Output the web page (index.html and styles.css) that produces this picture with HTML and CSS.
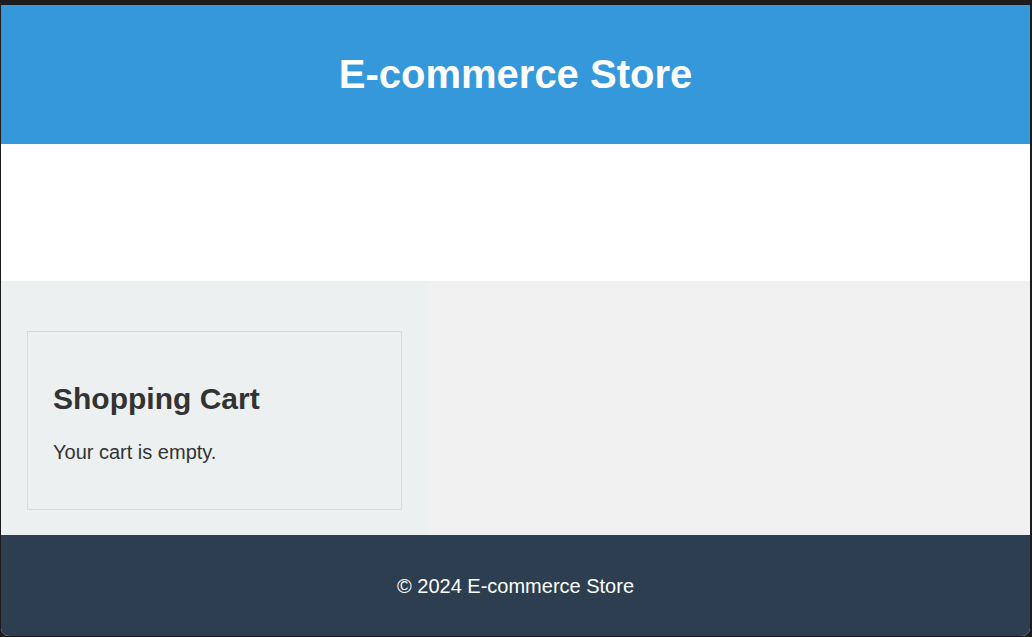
FILE: index.html
```html
<!DOCTYPE html>
<html lang="en">
<head>
<meta charset="utf-8">
<title>E-commerce Store</title>
<link rel="stylesheet" href="styles.css">
</head>
<body>
<div class="window">
  <header class="site-header">
    <h1>E-commerce Store</h1>
  </header>
  <section class="products"></section>
  <main class="main">
    <aside class="sidebar">
      <div class="cart">
        <h2>Shopping Cart</h2>
        <p>Your cart is empty.</p>
      </div>
    </aside>
    <div class="content"></div>
  </main>
  <footer class="site-footer">
    <p>&copy; 2024 E-commerce Store</p>
  </footer>
</div>
</body>
</html>
```

FILE: styles.css
```css
html, body {
  margin: 0;
  padding: 0;
  height: 100%;
}
body {
  background: #1c1c1c;
  font-family: "Liberation Sans", Arial, sans-serif;
  font-size: 20px;
  color: #333;
  overflow: hidden;
}
.window {
  margin: 5px 2px 0 1px;
  height: 631px;
  border-radius: 0 0 8px 8px;
  overflow: hidden;
  display: flex;
  flex-direction: column;
  background: #fff;
}
.site-header {
  background: #3498db;
  color: #fff;
  text-align: center;
  padding: 0 0 2px;
  height: 139px;
  box-sizing: border-box;
  display: flex;
  align-items: center;
  justify-content: center;
}
.site-header h1 {
  margin: 0;
  font-size: 40px;
  font-weight: bold;
  line-height: 46px;
}
.products {
  height: 137px;
  background: #fff;
}
.main {
  display: flex;
  height: 254px;
  background: #f0f0f0;
}
.sidebar {
  width: 426px;
  box-sizing: border-box;
  background: #ecf0f1;
  padding: 50px 25px 25px 26px;
}
.cart {
  border: 1px solid #d6dadb;
  padding: 26px 25px 25px 25px;
  height: 179px;
  box-sizing: border-box;
}
.cart h2 {
  margin: 24px 0 25px;
  font-size: 30px;
  line-height: 34px;
  font-weight: bold;
  color: #333;
}
.cart p {
  margin: 0;
  font-size: 20px;
  line-height: 23px;
  color: #333;
}
.content {
  flex: 1;
}
.site-footer {
  flex: 1;
  background: #2c3e50;
  color: #fff;
  display: flex;
  align-items: center;
  justify-content: center;
  padding-top: 2px;
}
.site-footer p {
  margin: 0;
  font-size: 20px;
  line-height: 23px;
}
```
